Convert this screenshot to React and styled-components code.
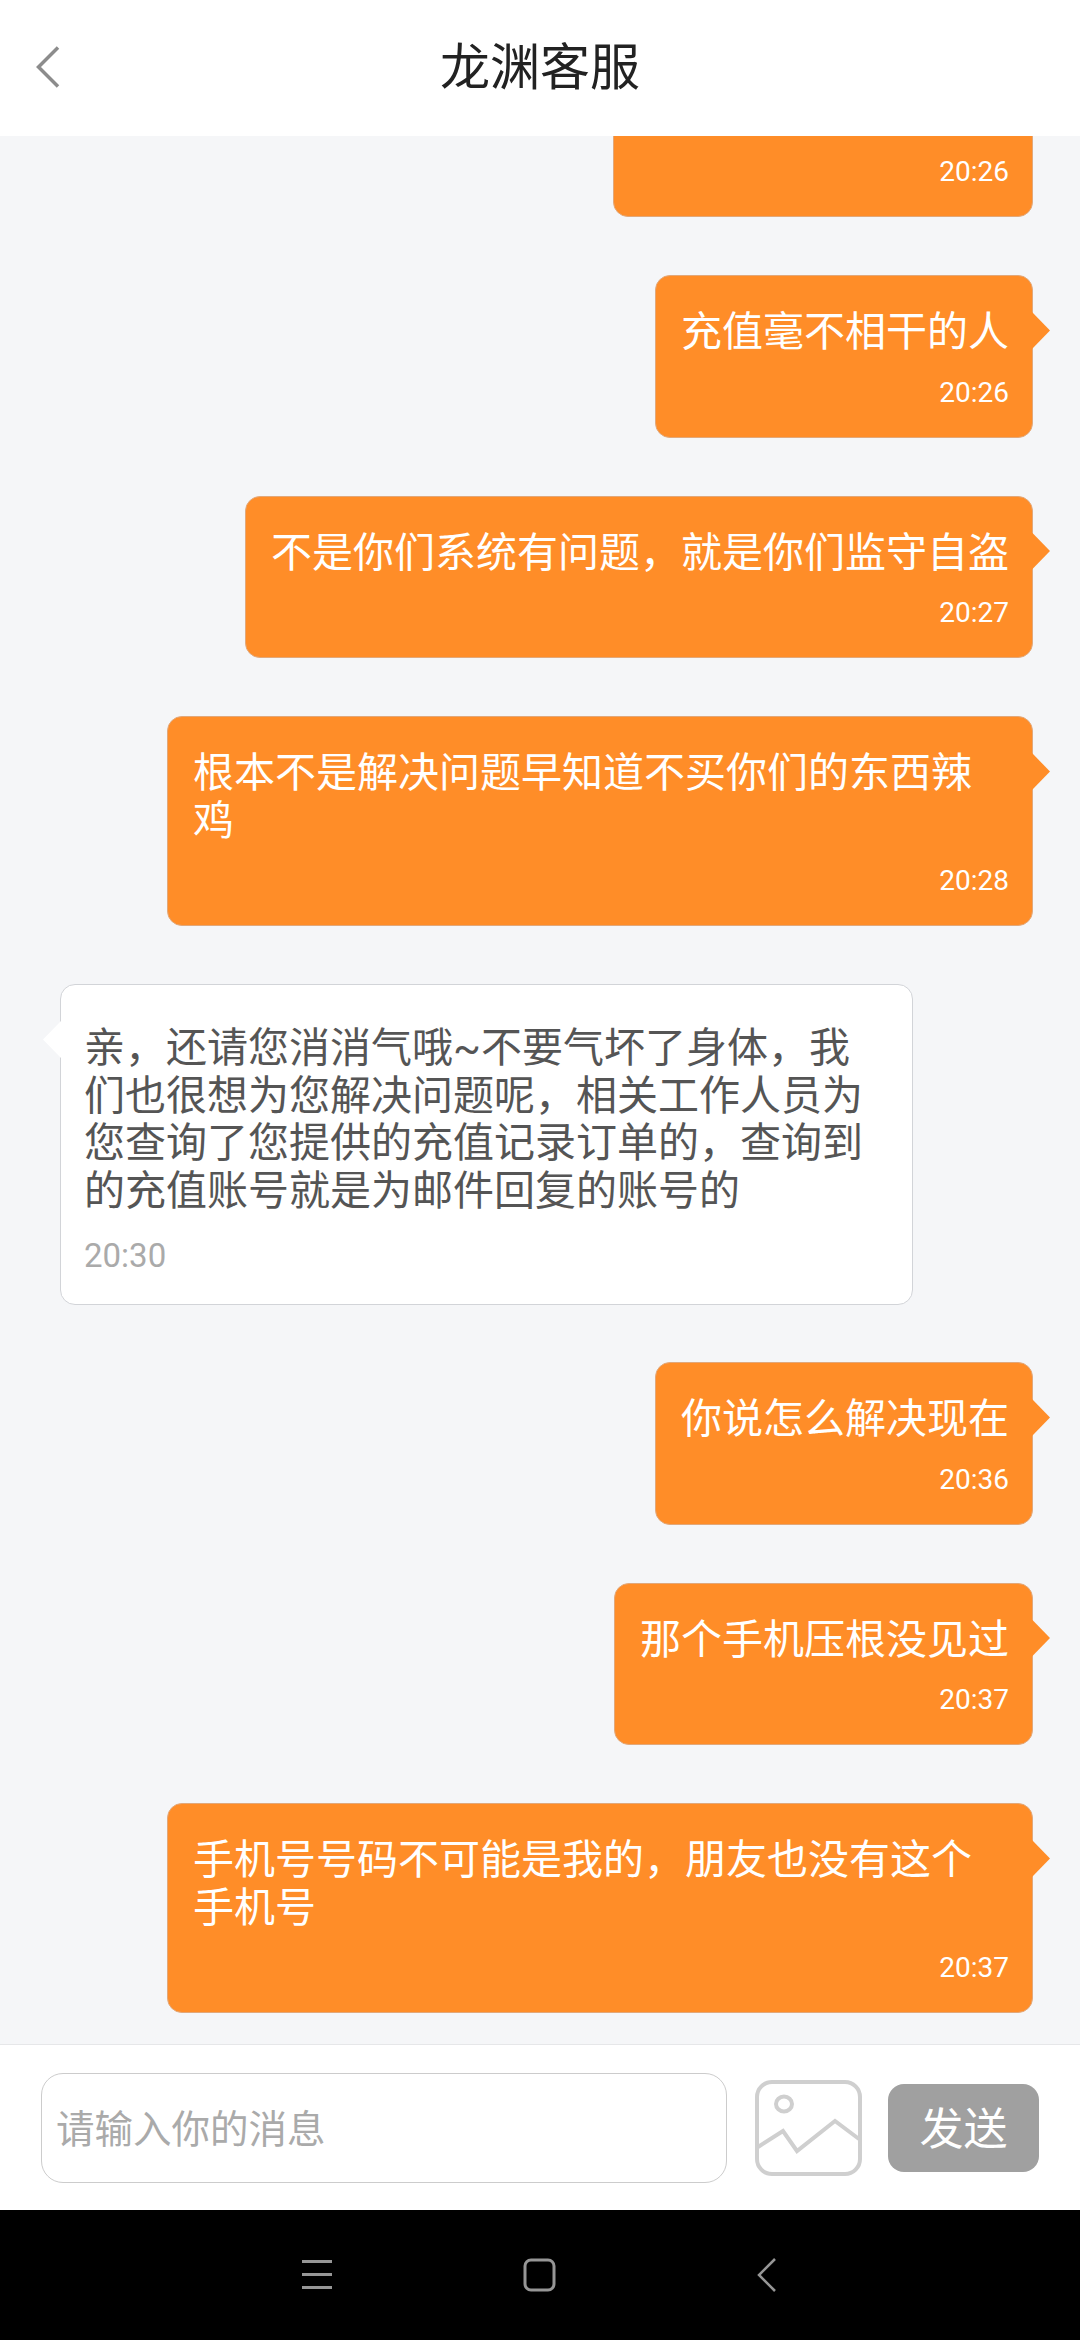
import React from "react";
import styled, { createGlobalStyle } from "styled-components";

const Global = createGlobalStyle`
  html, body { margin: 0; padding: 0; background: #000; }
  * { box-sizing: border-box; }
`;

const FONT = `Roboto, "Noto Sans CJK SC", sans-serif`;

const Screen = styled.div`
  width: 1080px;
  height: 2340px;
  display: flex;
  flex-direction: column;
  font-family: ${FONT};
  overflow: hidden;
`;

const Header = styled.header`
  height: 136px;
  flex: none;
  background: #fff;
  display: grid;
  grid-template-columns: 1fr auto 1fr;
  align-items: center;
  padding: 0 36px;
`;

const BackIcon = styled.svg`
  width: 24px;
  height: 42px;
  display: block;
  margin-top: -2px;
`;

const Title = styled.h1`
  margin: 0;
  font-size: 50px;
  line-height: 64px;
  font-weight: 400;
  color: #222;
`;

const Chat = styled.main`
  flex: 1;
  min-height: 0;
  background: #f5f6f8;
  overflow: hidden;
  display: flex;
  flex-direction: column;
  justify-content: flex-end;
  gap: 58px;
  padding: 0 47px 31px 60px;
`;

const Bubble = styled.div`
  position: relative;
  flex: none;
  align-self: ${(p) => (p.$mine ? "flex-end" : "flex-start")};
  max-width: ${(p) => (p.$mine ? "866px" : "853px")};
  margin-bottom: ${(p) => (p.$mine ? "0" : "-1px")};
  background: ${(p) => (p.$mine ? "#ff8d28" : "#fff")};
  border: 1px solid ${(p) => (p.$mine ? "#e2a87a" : "#d2d4d8")};
  border-radius: 15px;
  padding: ${(p) => (p.$mine ? "33px 23px 24px 25px" : "40px 24px 28px 23px")};
  color: ${(p) => (p.$mine ? "#fff" : "#555")};

  &::after {
    content: "";
    position: absolute;
    top: 36px;
    width: 18px;
    height: 37px;
    background: ${(p) => (p.$mine ? "#ff8d28" : "#fff")};
    ${(p) =>
      p.$mine
        ? "right: -18px; clip-path: polygon(0 0, 100% 50%, 0 100%);"
        : "left: -18px; clip-path: polygon(100% 0, 0 50%, 100% 100%);"}
  }
`;

const Text = styled.div`
  font-size: 41px;
  line-height: 47.5px;
  min-height: 47.5px;
`;

const Time = styled.div`
  font-size: ${(p) => (p.$mine ? "28px" : "33px")};
  line-height: 40px;
  margin-top: ${(p) => (p.$mine ? "16px" : "21px")};
  text-align: ${(p) => (p.$mine ? "right" : "left")};
  color: ${(p) => (p.$mine ? "#fff" : "#aaa")};
`;

const Composer = styled.footer`
  height: 166px;
  flex: none;
  background: #fff;
  border-top: 1px solid #e6e7e9;
  display: flex;
  align-items: center;
  padding-left: 41px;
`;

const Input = styled.div`
  width: 686px;
  height: 110px;
  border: 1.5px solid #ccc;
  border-radius: 22px;
  display: flex;
  align-items: center;
  padding: 0 0 4px 14px;
  font-size: 38.5px;
  color: #aaa;
`;

const ImageIcon = styled.svg`
  width: 107px;
  height: 96px;
  margin-left: 28px;
  flex: none;
  display: block;
`;

const Send = styled.button`
  width: 151px;
  height: 88px;
  margin-left: 26px;
  border: 0;
  border-radius: 16px;
  background: #a0a0a0;
  color: #fff;
  font-family: inherit;
  font-size: 44px;
  padding: 0 0 4px;
`;

const NavBar = styled.nav`
  height: 130px;
  flex: none;
  background: #000;
  display: flex;
  align-items: center;
  justify-content: center;
  gap: 191px;
  padding-right: 2px;
`;

const NavIcon = styled.svg`
  width: ${(p) => p.$w}px;
  height: 34px;
  margin-left: ${(p) => p.$shift || 0}px;
  display: block;
`;

const messages = [
  { mine: true, text: "\u00a0", time: "20:26", width: 420 },
  { mine: true, text: "充值毫不相干的人", time: "20:26" },
  { mine: true, text: "不是你们系统有问题\uff0c就是你们监守自盗", time: "20:27" },
  { mine: true, text: "根本不是解决问题早知道不买你们的东西辣鸡", time: "20:28" },
  {
    mine: false,
    text: "亲\uff0c还请您消消气哦~不要气坏了身体\uff0c我们也很想为您解决问题呢\uff0c相关工作人员为您查询了您提供的充值记录订单的\uff0c查询到的充值账号就是为邮件回复的账号的",
    time: "20:30",
  },
  { mine: true, text: "你说怎么解决现在", time: "20:36" },
  { mine: true, text: "那个手机压根没见过", time: "20:37" },
  { mine: true, text: "手机号号码不可能是我的\uff0c朋友也没有这个手机号", time: "20:37" },
];

export default function App() {
  return (
    <Screen lang="zh-CN">
      <Global />
      <Header>
        <BackIcon viewBox="0 0 24 42" fill="none">
          <path d="M22 1.5 2.5 21 22 40.5" stroke="#8c8c8c" strokeWidth="3.5" />
        </BackIcon>
        <Title>龙渊客服</Title>
      </Header>
      <Chat>
        {messages.map((m, i) => (
          <Bubble key={i} $mine={m.mine} style={m.width ? { width: m.width } : undefined}>
            <Text>{m.text}</Text>
            <Time $mine={m.mine}>{m.time}</Time>
          </Bubble>
        ))}
      </Chat>
      <Composer>
        <Input>请输入你的消息</Input>
        <ImageIcon viewBox="0 0 107 96" fill="none" stroke="#cfcfcf" strokeWidth="4">
          <rect x="2" y="2" width="103" height="92" rx="15" />
          <ellipse cx="29" cy="24" rx="8" ry="7.5" />
          <path d="M3 67 28 51 42 71 80 41 104 59" />
        </ImageIcon>
        <Send>发送</Send>
      </Composer>
      <NavBar>
        <NavIcon $w={30} viewBox="0 0 30 34" fill="none" stroke="#969696" strokeWidth="3">
          <path d="M0 3.5h30M0 16.5h30M0 29.5h30" />
        </NavIcon>
        <NavIcon $w={33} viewBox="0 0 33 34" fill="none" stroke="#969696" strokeWidth="3">
          <rect x="2" y="2" width="29" height="30" rx="6" />
        </NavIcon>
        <NavIcon $w={20} $shift={10} viewBox="0 0 20 34" fill="none" stroke="#969696" strokeWidth="2.5">
          <path d="M18 1 2 17l16 16" />
        </NavIcon>
      </NavBar>
    </Screen>
  );
}
